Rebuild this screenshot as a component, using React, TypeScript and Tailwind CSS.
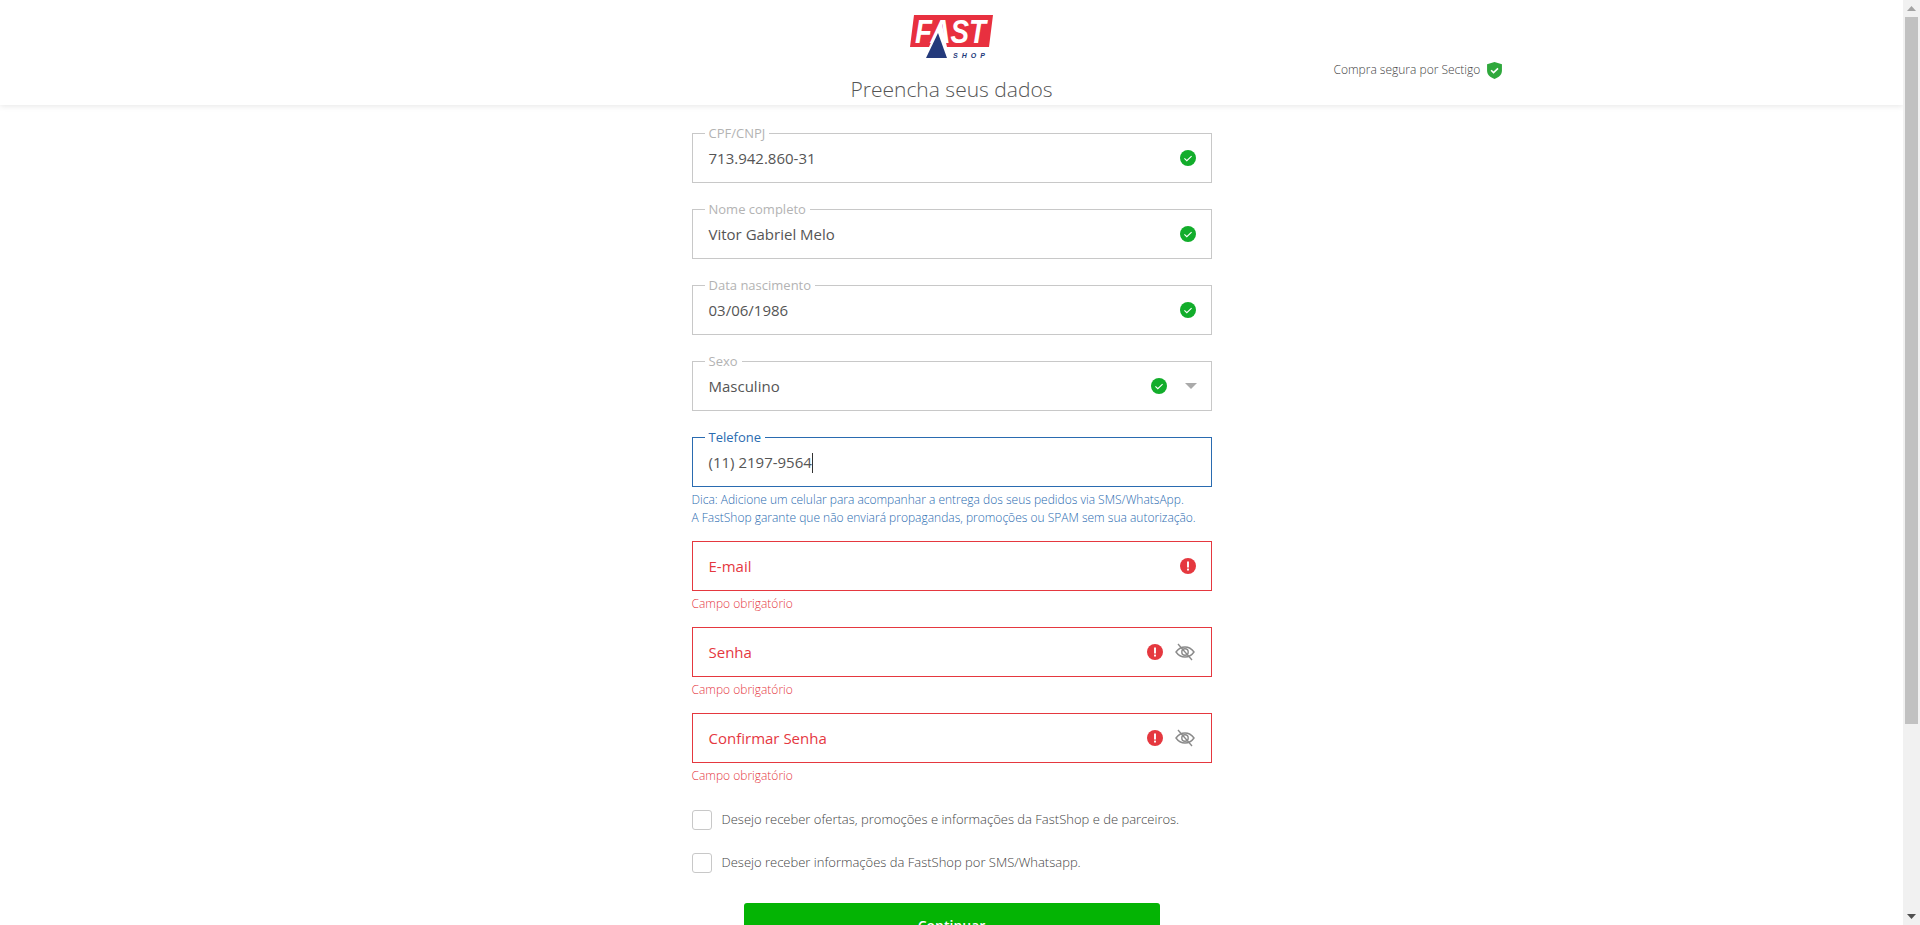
import React from "react";

const Check = ({ className = "" }: { className?: string }) => (
  <svg viewBox="0 0 16 16" className={"w-4 h-4 shrink-0 " + className}>
    <circle cx="8" cy="8" r="8" fill="#12ad2b" />
    <path d="M4.400 8.400l2.400 2.300 4.800-4.600" fill="none" stroke="#fff" strokeWidth="1.100" />
  </svg>
);
const Alert = () => (
  <svg viewBox="0 0 16 16" className="w-4 h-4 shrink-0">
    <circle cx="8" cy="8" r="8" fill="#e5383f" />
    <path d="M8 3.400v6" stroke="#fff" strokeWidth="1.900" />
    <rect x="7.050" y="10.600" width="1.900" height="1.900" fill="#fff" />
  </svg>
);
const Eye = () => (
  <svg viewBox="0 0 20 18" className="w-5 h-[18px] shrink-0" fill="none" stroke="#8a8a8a" strokeWidth="1.400">
    <path d="M1 9c2.400-3.400 5.400-5 9-5s6.600 1.600 9 5c-2.400 3.400-5.400 5-9 5s-6.600-1.600-9-5z" />
    <circle cx="10" cy="9" r="3.200" />
    <path d="M3 1l14 16" />
  </svg>
);

type FieldProps = {
  label: string;
  value?: string;
  state: "ok" | "focus" | "error";
  children?: React.ReactNode;
  caret?: boolean;
};

const Field = ({ label, value, state, children, caret }: FieldProps) => {
  const border = state === "ok" ? "border-[#c8c8c8]" : state === "focus" ? "border-[#2a6bb0]" : "border-[#e5383f]";
  return (
    <div className={"relative h-[50px] border flex items-center pl-4 pr-[15px] " + border}>
      {state !== "error" && (
        <span className={"absolute left-3 -top-[8px] bg-white px-1 text-[13px] leading-[14px] " + (state === "focus" ? "text-[#2a6bb0]" : "text-[#b3b3b3]")}>{label}</span>
      )}
      <span className={"flex-1 text-[15px] " + (state === "error" ? "text-[#e5383f]" : "text-[#555]")}>
        {state === "error" ? label : value}
        {caret && <span className="inline-block w-px h-[20px] bg-[#333] align-middle" />}
      </span>
      {children}
    </div>
  );
};

const Err = () => <p className="text-[12px] leading-4 text-[#e5383f] font-light mt-[5px] mb-[15px] h-[16px]">Campo obrigatório</p>;

export default function App() {
  return (
    <div className="flex h-[925px] overflow-hidden bg-white" style={{ fontFamily: '"Open Sans", sans-serif' }}>
      <div className="flex-1 min-w-0 flex flex-col">
        <header className="h-[105px] shrink-0 shadow-[0_1px_6px_rgba(0,0,0,0.1)] flex justify-center">
          <div className="w-[520px] flex flex-col items-center pt-[15px] relative">
            <svg viewBox="0 0 83 44" className="w-[83px] h-[44px] shrink-0 overflow-visible">
              <polygon points="4,0 83,0 79,32 0,32" fill="#e8303f" />
              <text x="5" y="28" fontFamily="Liberation Sans" fontStyle="italic" fontWeight="700" fontSize="34" fill="#fff" textLength="71" lengthAdjust="spacingAndGlyphs">FAST</text>
              <polygon points="31,5 37,32 19,32" fill="#fff" />
              <polygon points="28,18 37,43 16,43" fill="#243a7b" />
              <text x="43" y="43" fontFamily="Liberation Sans" fontStyle="italic" fontWeight="700" fontSize="7" letterSpacing="4" fill="#243a7b">SHOP</text>
            </svg>
            <h1 className="text-[21px] font-light leading-[30px] mt-[15px] text-[#555] whitespace-nowrap">Preencha seus dados</h1>
            <div className="absolute left-[642px] top-[61px] flex items-center gap-[7px] whitespace-nowrap text-[12px] font-light text-[#444]">
              Compra segura por Sectigo
              <svg viewBox="0 0 14 16" className="w-[15px] h-[17px]">
                <path d="M7 0l7 2v6c0 4-3 6.500-7 8-4-1.500-7-4-7-8V2z" fill="#2fa83c" />
                <path d="M3.800 7.800l2.300 2.200 4.200-4" fill="none" stroke="#fff" strokeWidth="1.500" />
              </svg>
            </div>
          </div>
        </header>
        <main className="w-[520px] mx-auto pt-[28px]">
          <div className="flex flex-col gap-[26px]">
            <Field label="CPF/CNPJ" value="713.942.860-31" state="ok"><Check /></Field>
            <Field label="Nome completo" value="Vitor Gabriel Melo" state="ok"><Check /></Field>
            <Field label="Data nascimento" value="03/06/1986" state="ok"><Check /></Field>
            <Field label="Sexo" value="Masculino" state="ok">
              <Check className="mr-[18px]" />
              <svg viewBox="0 0 12 6" className="w-3 h-[6px] -mr-px"><path d="M0 0h12L6 6z" fill="#aaa" /></svg>
            </Field>
          </div>
          <div className="mt-[26px]">
            <Field label="Telefone" value="(11) 2197-9564" state="focus" caret />
            <p className="text-[12px] font-light leading-[18px] text-[#2a6bb0] mt-[4px] mb-[14px] whitespace-nowrap">
              Dica: Adicione um celular para acompanhar a entrega dos seus pedidos via SMS/WhatsApp.<br />
              A FastShop garante que não enviará propagandas, promoções ou SPAM sem sua autorização.
            </p>
          </div>
          <Field label="E-mail" state="error"><Alert /></Field>
          <Err />
          <Field label="Senha" state="error"><div className="flex items-center gap-3 mr-px"><Alert /><Eye /></div></Field>
          <Err />
          <Field label="Confirmar Senha" state="error"><div className="flex items-center gap-3 mr-px"><Alert /><Eye /></div></Field>
          <Err />
          <label className="flex items-center gap-[10px] h-5 mt-[26px] text-[13px] font-light text-[#444]">
            <span className="w-5 h-5 border border-[#c8c8c8] rounded-[3px] shrink-0" />Desejo receber ofertas, promoções e informações da FastShop e de parceiros.
          </label>
          <label className="flex items-center gap-[10px] h-5 mt-[23px] text-[13px] font-light text-[#444]">
            <span className="w-5 h-5 border border-[#c8c8c8] rounded-[3px] shrink-0" />Desejo receber informações da FastShop por SMS/Whatsapp.
          </label>
          <button className="block w-[416px] h-[44px] mx-auto mt-[30px] bg-[#04b404] rounded-[3px] text-white font-semibold text-[14px]">Continuar</button>
        </main>
      </div>
      <div className="w-[17px] shrink-0 bg-[#f1f1f1] flex flex-col items-center">
        <svg viewBox="0 0 9 5" className="w-[9px] h-[5px] mt-[6px] shrink-0"><path d="M4.500 0L9 5H0z" fill="#a3a3a3" /></svg>
        <div className="w-[13px] h-[707px] mt-[6px] bg-[#c1c1c1] shrink-0" />
        <div className="flex-1" />
        <svg viewBox="0 0 9 5" className="w-[9px] h-[5px] mb-[6px] shrink-0"><path d="M0 0h9L4.500 5z" fill="#505050" /></svg>
      </div>
    </div>
  );
}
